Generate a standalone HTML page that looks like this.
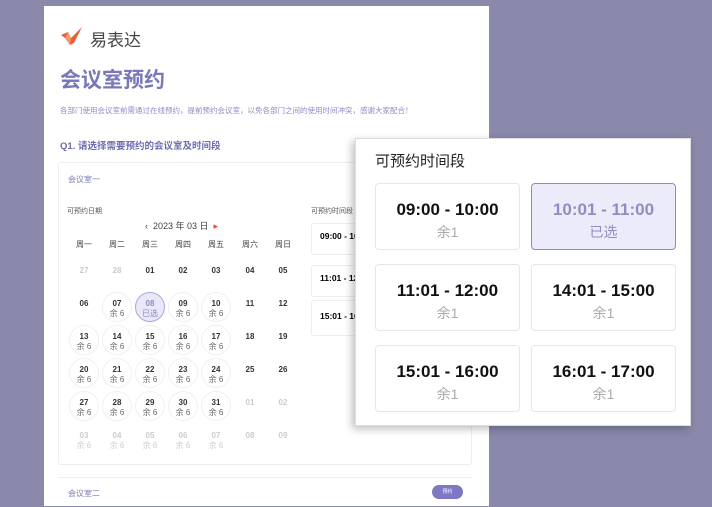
<!DOCTYPE html>
<html><head><meta charset="utf-8"><style>
*{margin:0;padding:0;box-sizing:border-box}
body{width:712px;height:500px;background:#8a88ab;position:relative;overflow:hidden;font-family:"Liberation Sans","Noto Sans CJK SC",sans-serif}
.a{position:absolute}
.page{left:44px;top:6px;width:445px;height:500px;background:#fff}
.c{position:absolute;width:30px;text-align:center;font-size:8px;font-weight:bold;color:#333;line-height:10px}
.c span{display:block;font-weight:normal;font-size:8px;color:#666}
.g{color:#ccc!important}.g span{color:#ccc!important}
.ring{position:absolute;width:30px;height:30px;border-radius:50%;border:1px solid #f0f0f4}
.card{position:absolute;width:145px;height:67px;border:1px solid #e6e6ea;border-radius:4px;text-align:center;background:#fff}
.card b{display:block;margin-top:16px;font-size:17px;color:#111}
.card i{display:block;font-style:normal;font-size:14px;color:#aaa;margin-top:2px}
</style></head><body>
<div class="a page"></div>
<svg class="a" style="left:60px;top:26px" width="24" height="20" viewBox="0 0 24 20"><path d="M1 9 L8 6 L11 12 L22 1 L14 17 L10 19 L5 12 Z" fill="#e8603a"/><path d="M8 6 L11 12 L10 19 L5 12Z" fill="#f19a6a"/></svg>
<div class="a" style="left:90px;top:26px;font-size:17px;color:#444">易表达</div>
<div class="a" style="left:60px;top:64px;font-size:21px;font-weight:bold;color:#7a78b8">会议室预约</div>
<div class="a" style="left:60px;top:105px;font-size:7.5px;color:#8d8bc4;white-space:nowrap">各部门使用会议室前需通过在线预约，提前预约会议室，以免各部门之间的使用时间冲突，感谢大家配合！</div>
<div class="a" style="left:60px;top:138px;font-size:9.5px;font-weight:bold;color:#6e6caf">Q1. 请选择需要预约的会议室及时间段</div>
<div class="a" style="left:58px;top:162px;width:414px;height:303px;border:1px solid #eee;border-radius:3px"></div>
<div class="a" style="left:68px;top:174px;font-size:8px;color:#7a78b8">会议室一</div>
<div class="a" style="left:67px;top:206px;font-size:7px;color:#555">可预约日期</div>
<div class="a" style="left:145px;top:219px;font-size:9px;color:#444">‹&nbsp; 2023 年 03 日 &nbsp;<span style="color:#e44">▸</span></div>
<div class="a" style="left:311px;top:206px;font-size:7px;color:#555">可预约时间段</div>
<div class="a" style="left:311px;top:223px;width:60px;height:32px;border:1px solid #eee;border-radius:3px;font-size:8.5px;font-weight:bold;padding:7px 0 0 8px">09:00 - 10</div>
<div class="a" style="left:311px;top:265px;width:60px;height:32px;border:1px solid #eee;border-radius:3px;font-size:8.5px;font-weight:bold;padding:7px 0 0 8px">11:01 - 12</div>
<div class="a" style="left:311px;top:300px;width:60px;height:36px;border:1px solid #eee;border-radius:3px;font-size:8.5px;font-weight:bold;padding:10px 0 0 8px">15:01 - 16</div>
<div id="cal"></div>
<div class="a" style="left:58px;top:477px;width:414px;height:30px;border-top:1px solid #eee"></div>
<div class="a" style="left:68px;top:488px;font-size:8px;color:#7a78b8">会议室二</div>
<div class="a" style="left:432px;top:485px;width:31px;height:14px;border-radius:7px;background:#7b78c4;color:#fff;font-size:5px;text-align:center;line-height:14px">预约</div>
<div class="a" style="left:355px;top:138px;width:336px;height:288px;background:#fff;border:1px solid #ddd;box-shadow:-3px 3px 8px rgba(0,0,0,.25)"></div>
<div class="a" style="left:375px;top:150px;font-size:15px;color:#222">可预约时间段</div>
<div class="card" style="left:375px;top:183px"><b>09:00 - 10:00</b><i>余1</i></div>
<div class="card" style="left:531px;top:183px;background:#ebebfa;border-color:#8d8bc4"><b style="color:#8f8dc2">10:01 - 11:00</b><i style="color:#8f8dc2">已选</i></div>
<div class="card" style="left:375px;top:264px"><b>11:01 - 12:00</b><i>余1</i></div>
<div class="card" style="left:531px;top:264px"><b>14:01 - 15:00</b><i>余1</i></div>
<div class="card" style="left:375px;top:345px"><b>15:01 - 16:00</b><i>余1</i></div>
<div class="card" style="left:531px;top:345px"><b>16:01 - 17:00</b><i>余1</i></div>
<script>
var xs=[84,117,150,183,216,250,283],h="",wd=["周一","周二","周三","周四","周五","周六","周日"];
for(var i=0;i<7;i++)h+='<div class="c" style="left:'+(xs[i]-15)+'px;top:240px;font-weight:normal;color:#444">'+wd[i]+'</div>';
var rows=[["27g","28g","01","02","03","04","05"],["06","07s","08x","09s","10s","11","12"],["13s","14s","15s","16s","17s","18","19"],["20s","21s","22s","23s","24s","25","26"],["27s","28s","29s","30s","31s","01g","02g"],["03gs","04gs","05gs","06gs","07gs","08g","09g"]];
for(var r=0;r<6;r++)for(var i=0;i<7;i++){var v=rows[r][i],n=v.slice(0,2),y=266+r*33,x=xs[i]-15;
var g=v.indexOf("g")>=0,s=v.indexOf("s")>=0,sel=v.indexOf("x")>=0;
if(s&&!g)h+='<div class="ring" style="left:'+x+'px;top:'+(y-7)+'px"></div>';
if(sel)h+='<div class="ring" style="left:'+x+'px;top:'+(y-7)+'px;background:#e8e8f8;border-color:#a9a7d6"></div>';
h+='<div class="c'+(g?' g':'')+'" style="left:'+x+'px;top:'+y+'px'+(sel?';color:#8d8bc4':'')+'">'+n+(s?'<span>余 6</span>':'')+(sel?'<span style="color:#8d8bc4">已选</span>':'')+'</div>';}
document.getElementById("cal").innerHTML=h;
</script>
</body></html>
